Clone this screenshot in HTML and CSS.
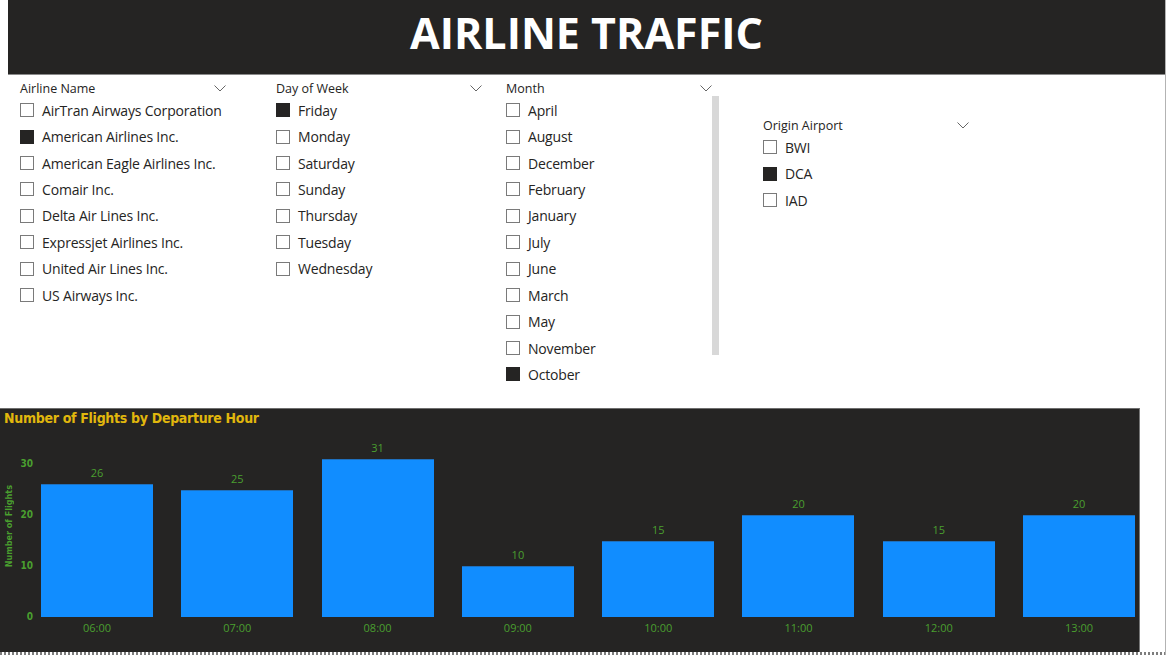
FILE: index.html
```html
<!DOCTYPE html>
<html>
<head>
<meta charset="utf-8">
<link rel="stylesheet" href="styles.css">
</head>
<body>
<div class="page">
  <header class="banner"><h1 class="title">AIRLINE TRAFFIC</h1></header>

  <section class="slicers">
    <div class="slicer s-airline">
      <div class="slicer-head"><span>Airline Name</span><svg class="chev" viewBox="0 0 12 7"><path d="M0.5 0.5 L6 6 L11.5 0.5" fill="none" stroke="#666" stroke-width="1"/></svg></div>
      <ul class="items">
        <li><span class="box"></span>AirTran Airways Corporation</li>
        <li><span class="box on"></span>American Airlines Inc.</li>
        <li><span class="box"></span>American Eagle Airlines Inc.</li>
        <li><span class="box"></span>Comair Inc.</li>
        <li><span class="box"></span>Delta Air Lines Inc.</li>
        <li><span class="box"></span>Expressjet Airlines Inc.</li>
        <li><span class="box"></span>United Air Lines Inc.</li>
        <li><span class="box"></span>US Airways Inc.</li>
      </ul>
    </div>
    <div class="slicer s-day">
      <div class="slicer-head"><span>Day of Week</span><svg class="chev" viewBox="0 0 12 7"><path d="M0.5 0.5 L6 6 L11.5 0.5" fill="none" stroke="#666" stroke-width="1"/></svg></div>
      <ul class="items">
        <li><span class="box on"></span>Friday</li>
        <li><span class="box"></span>Monday</li>
        <li><span class="box"></span>Saturday</li>
        <li><span class="box"></span>Sunday</li>
        <li><span class="box"></span>Thursday</li>
        <li><span class="box"></span>Tuesday</li>
        <li><span class="box"></span>Wednesday</li>
      </ul>
    </div>
    <div class="slicer s-month">
      <div class="slicer-head"><span>Month</span><svg class="chev" viewBox="0 0 12 7"><path d="M0.5 0.5 L6 6 L11.5 0.5" fill="none" stroke="#666" stroke-width="1"/></svg></div>
      <div class="scroll-wrap">
        <ul class="items">
          <li><span class="box"></span>April</li>
          <li><span class="box"></span>August</li>
          <li><span class="box"></span>December</li>
          <li><span class="box"></span>February</li>
          <li><span class="box"></span>January</li>
          <li><span class="box"></span>July</li>
          <li><span class="box"></span>June</li>
          <li><span class="box"></span>March</li>
          <li><span class="box"></span>May</li>
          <li><span class="box"></span>November</li>
          <li><span class="box on"></span>October</li>
        </ul>
        <div class="scrollbar"></div>
      </div>
    </div>
    <div class="slicer s-origin">
      <div class="slicer-head"><span>Origin Airport</span><svg class="chev" viewBox="0 0 12 7"><path d="M0.5 0.5 L6 6 L11.5 0.5" fill="none" stroke="#666" stroke-width="1"/></svg></div>
      <ul class="items">
        <li><span class="box"></span>BWI</li>
        <li><span class="box on"></span>DCA</li>
        <li><span class="box"></span>IAD</li>
      </ul>
    </div>
  </section>

  <section class="chart">
    <h2 class="chart-title">Number of Flights by Departure Hour</h2>
    <div class="chart-body">
      <div class="y-title"><span>Number of Flights</span></div>
      <div class="y-axis">
        <span>30</span><span>20</span><span>10</span><span>0</span>
      </div>
      <div class="plot-wrap">
        <div class="plot">
          <div class="col"><span class="val">26</span><div class="bar" style="height:132.6px"></div></div>
          <div class="col"><span class="val">25</span><div class="bar" style="height:127.5px"></div></div>
          <div class="col"><span class="val">31</span><div class="bar" style="height:158.1px"></div></div>
          <div class="col"><span class="val">10</span><div class="bar" style="height:51px"></div></div>
          <div class="col"><span class="val">15</span><div class="bar" style="height:76.5px"></div></div>
          <div class="col"><span class="val">20</span><div class="bar" style="height:102px"></div></div>
          <div class="col"><span class="val">15</span><div class="bar" style="height:76.5px"></div></div>
          <div class="col"><span class="val">20</span><div class="bar" style="height:102px"></div></div>
        </div>
        <div class="x-axis">
          <span>06:00</span><span>07:00</span><span>08:00</span><span>09:00</span>
          <span>10:00</span><span>11:00</span><span>12:00</span><span>13:00</span>
        </div>
      </div>
    </div>
  </section>
  <div class="dots"></div>
</div>
</body>
</html>
```
FILE: styles.css
```css
html, body {
  margin: 0;
  padding: 0;
  background: #ffffff;
}
body {
  font-family: "Open Sans", "Noto Sans", sans-serif;
  color: #252423;
}
.page {
  width: 1165px;
  height: 655px;
  border-right: 1px solid #b3b3b3;
  position: relative;
  overflow: hidden;
}
.banner {
  margin-left: 8px;
  width: 1157px;
  height: 75px;
  background: #252423;
  border-bottom: 1px solid #8a8a8a;
  box-sizing: border-box;
  display: flex;
  align-items: center;
  justify-content: center;
}
.title {
  margin: 0;
  color: #ffffff;
  font-family: "Open Sans", sans-serif;
  font-weight: 700;
  font-size: 43px;
  line-height: 1;
  padding-bottom: 10px;
  letter-spacing: 0;
}

/* slicers */
.slicers {
  height: 333px;
  display: flex;
  padding-left: 20px;
  box-sizing: border-box;
}
.slicer {
  display: flex;
  flex-direction: column;
  padding-top: 5px;
}
.s-airline { width: 256px; }
.s-day { width: 230px; }
.s-month { width: 257px; }
.s-origin { padding-top: 42px; }
.slicer-head {
  width: 207px;
  height: 16px;
  display: flex;
  align-items: center;
  justify-content: space-between;
  font-size: 12.5px;
  color: #252423;
}
.chev {
  width: 12px;
  height: 7px;
  margin-right: 1px;
}
.items {
  list-style: none;
  margin: 1px 0 0 0;
  padding: 0;
}
.items li {
  height: 26.43px;
  display: flex;
  align-items: center;
  font-size: 14px;
  letter-spacing: -0.18px;
  color: #252423;
  white-space: nowrap;
}
.box {
  width: 14px;
  height: 14px;
  border: 1px solid #7a7a7a;
  box-sizing: border-box;
  margin-right: 8px;
  flex: none;
  background: #ffffff;
}
.box.on {
  background: #252423;
  border-color: #252423;
}
.scroll-wrap {
  display: flex;
  align-items: flex-start;
}
.scroll-wrap .items { width: 206px; }
.scrollbar {
  width: 7px;
  height: 259px;
  background: #d8d8d8;
}

/* chart */
.chart {
  width: 1140px;
  height: 244px;
  background: #252423;
  border-top: 1px solid #6e6e6e;
  border-right: 1px solid #777;
  box-sizing: border-box;
  display: flex;
  flex-direction: column;
}
.chart-title {
  margin: 0;
  padding: 1px 0 0 4px;
  height: 17px;
  line-height: 17px;
  font-family: "DejaVu Sans Condensed", "DejaVu Sans", sans-serif;
  font-weight: 700;
  font-size: 14px;
  color: #e1b70d;
  letter-spacing: -0.3px;
}
.chart-body {
  display: flex;
  flex: 1;
}
.y-title {
  width: 18px;
  height: 190px;
  display: flex;
  align-items: flex-end;
  justify-content: center;
}
.y-title span {
  writing-mode: vertical-rl;
  transform: rotate(180deg);
  font-family: "DejaVu Sans Condensed", "DejaVu Sans", sans-serif;
  font-weight: 700;
  font-size: 9px;
  color: #4a9f2f;
  margin-bottom: 50px;
  white-space: nowrap;
}
.y-axis {
  width: 15px;
  height: 165px;
  margin-top: 31px;
  display: flex;
  flex-direction: column;
  justify-content: space-between;
  align-items: flex-end;
  font-family: "DejaVu Sans Condensed", "DejaVu Sans", sans-serif;
  font-weight: 700;
  font-size: 10px;
  line-height: 12px;
  color: #4a9f2f;
}
.plot-wrap {
  margin-left: 8px;
  display: flex;
  flex-direction: column;
}
.plot {
  height: 190px;
  display: grid;
  grid-template-columns: repeat(8, 112px);
  column-gap: 28.3px;
}
.col {
  display: flex;
  flex-direction: column;
  justify-content: flex-end;
  align-items: center;
}
.val {
  font-size: 11px;
  line-height: 14px;
  margin-bottom: 4px;
  color: #4a9f2f;
}
.bar {
  width: 112px;
  background: #118dff;
  box-shadow: inset 0 1px 0 #1f70bd;
}
.x-axis {
  display: grid;
  grid-template-columns: repeat(8, 112px);
  column-gap: 28.3px;
  margin-top: 4px;
  font-size: 11px;
  line-height: 14px;
  color: #4a9f2f;
  text-align: center;
}
.dots {
  position: absolute;
  left: 0;
  top: 652px;
  width: 1167px;
  height: 3px;
  background: repeating-linear-gradient(90deg, #7d7d7d 0 2px, transparent 2px 4px);
}
```
